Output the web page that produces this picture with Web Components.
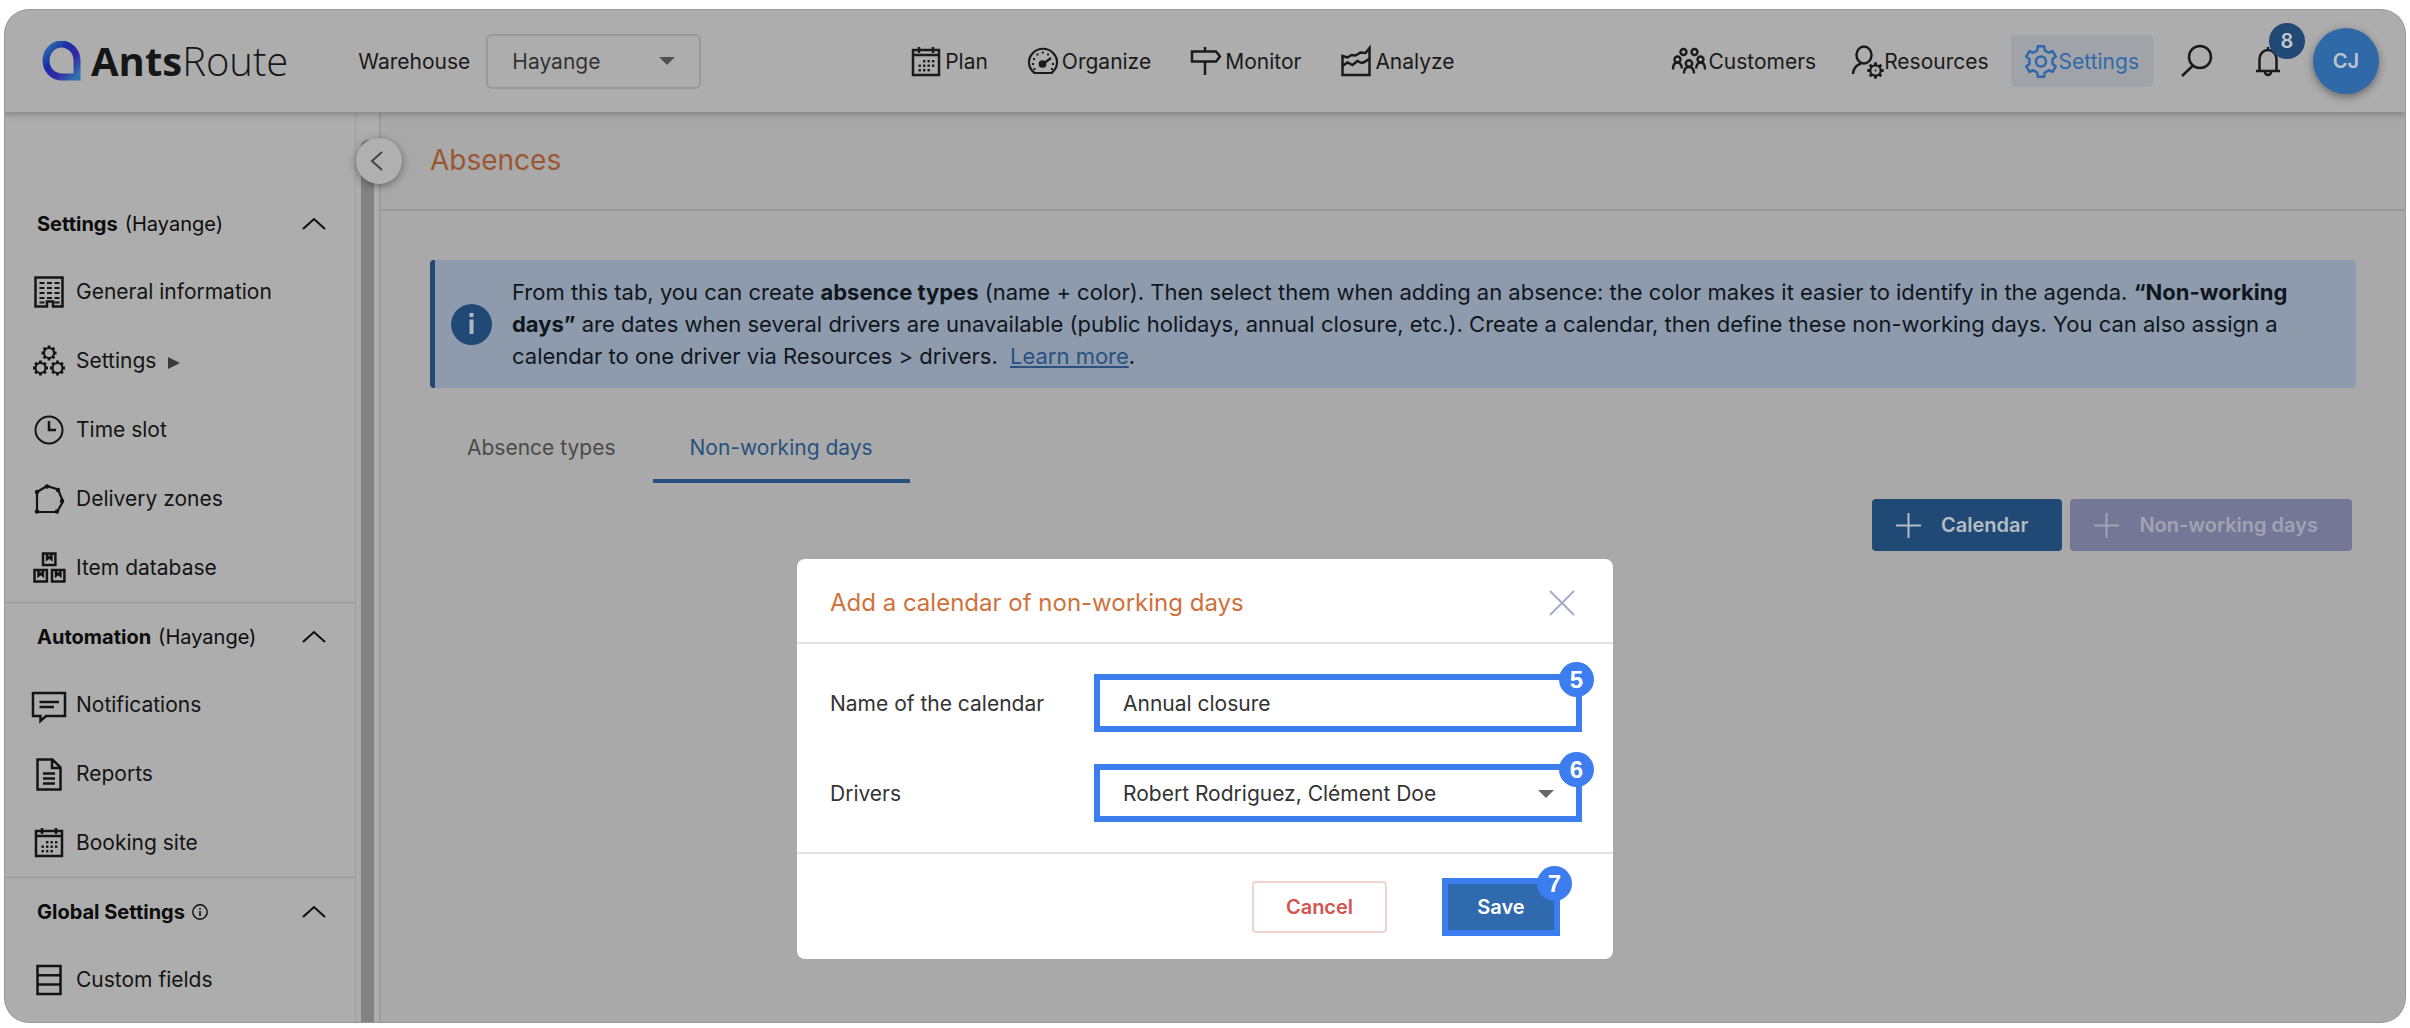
<!DOCTYPE html>
<html lang="en">
<head>
<meta charset="utf-8">
<title>AntsRoute – Absences</title>
<style>
  html, body { height: 100%; }
  body { margin: 0; background: #fff; font-family: Inter, "Noto Sans", sans-serif; font-size: 21px; color: #1a1a1a; }
</style>
</head>
<body>
<ants-app></ants-app>

<script>
const gear = (cx, cy, r, teeth, w, hole) => {
  const pts = [];
  const step = Math.PI * 2 / teeth;
  for (let i = 0; i < teeth; i++) {
    const a = i * step - Math.PI / 2;
    for (const [k, rr] of [[-0.3, 0.76], [-0.2, 1], [0.2, 1], [0.3, 0.76]]) {
      pts.push((cx + Math.cos(a + k * step) * r * rr).toFixed(2) + ' ' + (cy + Math.sin(a + k * step) * r * rr).toFixed(2));
    }
  }
  return `<path stroke-width="${w}" stroke-linejoin="round" d="M${pts.join('L')}Z"/>` +
    (hole ? `<circle cx="${cx}" cy="${cy}" r="${hole}" stroke-width="${w}"/>` : '');
};
/* a ring with short teeth round it, for the smallest gears */
const cog = (cx, cy, r, tooth) => {
  let d = '';
  for (let i = 0; i < 8; i++) {
    const c = Math.cos(i * Math.PI / 4), s = Math.sin(i * Math.PI / 4);
    d += `M${(cx + c * r).toFixed(2)} ${(cy + s * r).toFixed(2)}L${(cx + c * (r + tooth)).toFixed(2)} ${(cy + s * (r + tooth)).toFixed(2)}`;
  }
  return `<circle cx="${cx}" cy="${cy}" r="${r}" stroke-width="2.200"/><path d="${d}" stroke-width="2.800"/>`;
};
const dots = (list, s) => list.map(([x, y]) => `<rect x="${x}" y="${y}" width="${s}" height="${s}" fill="currentColor" stroke="none"/>`).join('');
const calDots = dots([[12,14],[16.5,14],[21,14],[7.5,18.5],[12,18.5],[16.5,18.5],[21,18.5],[7.5,23],[12,23],[16.5,23]], 2.4);
const box = (x, y) => `<path d="M${x} ${y}h12.400v11.500h-12.400zM${x + 4} ${y}v5.500l2.200-1.800 2.200 1.800v-5.500"/>`;

const ICONS = {
  calendar: `<path d="M2 4h26v25H2zM2 9h26M8 1v6M22 1v6"/>${calDots}`,
  gauge: `<path d="M6.500 27A14 13.500 0 1 1 23.500 27Z" stroke-width="2.200"/><circle cx="14.500" cy="18" r="2.600" fill="currentColor"/><path d="M15 18l8-6" stroke-width="2.200"/>${dots([[4,17],[5,12],[8.500,7.500],[13.800,5.500],[19,7.500],[24,17],[5.500,22],[23,22]], 2)}`,
  sign: `<path d="M1 5.500h24l4 5-4 5H1zM14 1v4M14 16v13"/>`,
  area: `<path d="M1.500 10v19h27V2l-4 5-5-.5-5 3-4-.500-4 2.500zM1.500 20l5-3.500 5 2.500 5-4 4 2 3-1 5-3.500"/>`,
  people: `<g stroke-width="2.400"><circle cx="11.500" cy="6" r="3"/><circle cx="22.500" cy="6" r="3"/><circle cx="5.500" cy="13.500" r="3"/><circle cx="28.500" cy="13.500" r="3"/><circle cx="17" cy="17.500" r="3.200"/><path d="M1 23.500c0-4 1.500-7 4.500-7s4 2.500 4.500 6M33 23.500c0-4-1.500-7-4.500-7s-4 2.500-4.500 6M12 27.500c0-4 1.500-6.500 5-6.500s5 2.500 5 6.500"/></g>`,
  userGear: `<ellipse cx="12" cy="9" rx="7.500" ry="8.500"/><path d="M1 28c.5-6 3-9 8-10.500"/>${cog(23.500, 24.500, 5.200, 3)}<circle cx="23.500" cy="24.500" r="1" fill="currentColor" stroke="none"/>`,
  gear: gear(16, 16.500, 15.500, 6, 2.500, 5),
  search: `<circle cx="19" cy="12" r="11"/><path d="M12 20.500L1 31"/>`,
  bell: `<path d="M1 26h24M4.500 26V14a8.500 9 0 0 1 17 0v12M13 5V2"/><path d="M10 27a3 3 0 1 0 6 0"/>`,
  building: `<path d="M1.500 1.500h27v29H19v-5h-6v5H1.500z"/><path stroke-width="2" stroke-dasharray="5 2.500" d="M5.500 7h20M5.500 12h20M5.500 17h20M5.500 22h20M5.500 26.500h5M20.500 26.500h5"/>`,
  gears: cog(15, 8, 5, 2.500) + cog(6.500, 23, 5, 2.500) + cog(23.500, 23, 5, 2.500),
  clock: `<circle cx="15" cy="16" r="13.500" stroke-width="2"/><path d="M15 7v9h7"/>`,
  zone: `<path d="M3 9l10-6 11 3.500 5 12L23 29H3z" stroke-width="2.200"/>${[[3,9],[13,3.500],[24,7],[28,18],[23,28.500],[3,28.500]].map(([x,y]) => `<circle cx="${x}" cy="${y}" r="2.200" fill="currentColor" stroke="none"/>`).join('')}`,
  boxes: box(9, 1.500) + box(0.500, 18) + box(18, 18),
  message: `<path d="M-1 4h32v23H12l-5.500 5v-5H-1z"/><path d="M5.500 13H25M5.500 18H20"/>`,
  report: `<path d="M3.500 1.500h15l8 8v22h-23zM18 1.500v8.500h8.500M9 15.500h12M9 20.500h12M9 25.500h12"/>`,
  rows: `<path d="M3.500 2h23v28h-23zM3.500 11.300h23M3.500 20.600h23"/>`,
  info: `<circle cx="8" cy="8" r="7.200" stroke-width="1.400"/><path stroke-width="1.600" d="M8 7v5M8 4v1.600"/>`,
  up: `<path d="M1 12L12 2l11 10" stroke-width="2"/>`,
  back: `<path d="M11 1L1 10l10 9" stroke-width="2"/>`,
  close: `<path d="M1 1l24 24M25 1L1 25" stroke-width="2"/>`,
  plus: `<path d="M12.500 0v25M0 12.500h25" stroke-width="2"/>`,
  down: `<path d="M0 0h16l-8 8z" fill="currentColor" stroke="none"/>`,
  right: `<path d="M0 0l12 6-12 6z" fill="currentColor" stroke="none"/>`,
  infoFull: `<circle cx="20.500" cy="20.500" r="20.500" fill="#204975" stroke="none"/><path stroke="#b0b7c0" stroke-width="4" d="M20.500 15.500V30M20.500 9v4"/>`
};

const define = (name, css, html) => customElements.define(name, class extends HTMLElement {
  connectedCallback() {
    if (this.shadowRoot) return;
    const root = this.attachShadow({ mode: 'open' });
    root.innerHTML = `<style>*{box-sizing:border-box}button,input,select{font:inherit;color:inherit;margin:0}${css}</style>` +
      (typeof html === 'function' ? html(this) : html);
  }
});

/* name, w, h: the icon and the box that it is drawn in */
define('ar-icon', `:host{display:inline-flex;flex:none}svg{display:block;overflow:visible}`, el => {
  const w = el.getAttribute('w') || 30, h = el.getAttribute('h') || w;
  return `<svg aria-hidden="true" width="${w}" height="${h}" viewBox="0 0 ${w} ${h}" fill="none" stroke="currentColor" stroke-width="2.500">${ICONS[el.getAttribute('name')]}</svg>`;
});

define('ar-logo', `
  :host{display:flex;align-items:center;gap:10px;font-family:"Open Sans","Noto Sans",sans-serif;font-size:40px;line-height:48px;color:#161616}
  svg{display:block;flex:none} b{font-weight:700} span{font-weight:300}`, `
  <svg width="39" height="40" viewBox="0 0 39 40" aria-hidden="true">
    <defs><linearGradient id="g" x1="0" y1="0" x2="1" y2="1"><stop offset="0" stop-color="#2c78ae"/><stop offset=".35" stop-color="#1a2fa6"/><stop offset=".65" stop-color="#3327a4"/><stop offset="1" stop-color="#2f74ae"/></linearGradient></defs>
    <path d="M35 36H19A15.500 16.500 0 1 1 35 19Z" fill="none" stroke="url(#g)" stroke-width="7"/>
  </svg>
  <div><b>Ants</b><span>Route</span></div>`);

define('nav-link', `
  :host{display:block}
  a{display:flex;align-items:center;gap:var(--icon-gap,4px);height:52px;padding:0 14px;border-radius:4px;color:inherit;text-decoration:none;white-space:nowrap}
  :host([active]) a{background:#a0a4a9;color:#3069ab}`,
  el => `<a href="#"><ar-icon name="${el.getAttribute('icon')}" w="${el.getAttribute('w') || 30}" h="${el.getAttribute('h') || 30}"></ar-icon><slot></slot></a>`);

define('app-header', `
  :host{display:flex;align-items:center;height:103px;flex:none;padding:0 26px 0 37px;background:#adadad;border-bottom:1px solid #8d8f8d;box-shadow:0 2px 6px rgba(0,0,0,.22);position:relative;z-index:2}
  .warehouse{display:flex;align-items:center;gap:16px;margin-left:70px}
  .select{position:relative;display:flex;align-items:center;color:#333}
  select{appearance:none;width:215px;height:55px;padding:0 24px;border:2px solid #999;border-radius:6px;background:none}
  .select ar-icon{position:absolute;right:26px;pointer-events:none;color:#505050}
  nav{display:flex;gap:12px}
  .main{margin:0 auto;padding-left:6px}
  .manage{gap:8px;--icon-gap:2px}
  .tools{display:flex;align-items:center;margin-left:28px}
  button{border:0;background:none;padding:0;display:flex;position:relative}
  .bell{margin:0 32px 0 42px}
  .badge{position:absolute;left:14px;top:-22px;width:36px;height:36px;border-radius:50%;background:#204975;color:#c4c8cc;font-size:20px;font-weight:600;line-height:36px;text-align:center}
  .avatar{width:66px;height:66px;border-radius:50%;background:#3069a8;color:#bcc4cc;font-size:20px;font-weight:600;align-items:center;justify-content:center;box-shadow:0 3px 8px rgba(0,0,0,.4)}`, `
  <ar-logo></ar-logo>
  <div class="warehouse">
    <label for="wh">Warehouse</label>
    <div class="select"><select id="wh"><option>Hayange</option></select><ar-icon name="down" w="16" h="8"></ar-icon></div>
  </div>
  <nav class="main" aria-label="Operations">
    <nav-link icon="calendar">Plan</nav-link>
    <nav-link icon="gauge">Organize</nav-link>
    <nav-link icon="sign">Monitor</nav-link>
    <nav-link icon="area">Analyze</nav-link>
  </nav>
  <nav class="manage" aria-label="Management">
    <nav-link icon="people" w="34">Customers</nav-link>
    <nav-link icon="userGear" w="30" h="30">Resources</nav-link>
    <nav-link icon="gear" w="32" h="33" active>Settings</nav-link>
  </nav>
  <div class="tools">
    <button aria-label="Search"><ar-icon name="search" w="32"></ar-icon></button>
    <button class="bell" aria-label="Alerts"><ar-icon name="bell" w="26" h="32"></ar-icon><span class="badge">8</span></button>
    <button class="avatar">CJ</button>
  </div>`);

define('side-item', `
  :host{display:block}
  a{display:flex;align-items:center;gap:12px;height:69px;padding-left:29px;color:#141414;text-decoration:none}
  ar-icon[name=right]{color:#3a3a3a;margin-top:4px}`,
  el => `<a href="#"><ar-icon name="${el.getAttribute('icon')}" w="30" h="32"></ar-icon><slot></slot>${el.hasAttribute('sub') ? '<ar-icon name="right" w="12"></ar-icon>' : ''}</a>`);

define('side-section', `
  :host{display:block;border-top:1px solid #989898}
  :host(:first-of-type){border-top:0}
  button{display:flex;align-items:center;width:100%;height:67px;border:0;background:none;padding:0 29px 0 32px;font-size:20px;text-align:left;color:#0c0c0c}
  b{font-weight:700;margin-right:7px}
  ar-icon[name=up]{margin-left:auto}`,
  el => `<button><b>${el.getAttribute('title-text')}</b>${el.getAttribute('scope') || ''}${el.hasAttribute('info') ? '<ar-icon name="info" w="16"></ar-icon>' : ''}<ar-icon name="up" w="24" h="14"></ar-icon></button><slot></slot>`);

define('side-bar', `
  :host{display:flex;flex:none;width:376px;background:#adadad;border-right:2px solid #9b9b9b;position:relative}
  .list{flex:1;padding-top:77px}
  .track{width:24px;border-left:1px solid #9f9f9f;padding:27px 5px 0 5px;display:flex}
  .thumb{flex:1;background:#828282;border-radius:7px 7px 0 0}
  .fold{position:absolute;right:-23px;top:25px;width:46px;height:46px;border:0;border-radius:50%;background:#b0b0b0;color:#444;display:flex;align-items:center;justify-content:center;padding:0 4px 0 0;box-shadow:0 2px 8px rgba(0,0,0,.4)}`, `
  <div class="list">
    <side-section title-text="Settings" scope="(Hayange)">
      <side-item icon="building">General information</side-item>
      <side-item icon="gears" sub>Settings</side-item>
      <side-item icon="clock">Time slot</side-item>
      <side-item icon="zone">Delivery zones</side-item>
      <side-item icon="boxes">Item database</side-item>
    </side-section>
    <side-section title-text="Automation" scope="(Hayange)">
      <side-item icon="message">Notifications</side-item>
      <side-item icon="report">Reports</side-item>
      <side-item icon="calendar">Booking site</side-item>
    </side-section>
    <side-section title-text="Global Settings" info>
      <side-item icon="rows">Custom fields</side-item>
    </side-section>
  </div>
  <div class="track"><div class="thumb"></div></div>
  <button class="fold" aria-label="Collapse menu"><ar-icon name="back" w="12" h="20"></ar-icon></button>`);

define('info-banner', `
  :host{display:flex;align-items:center;gap:20px;padding:16px 50px 16px 16px;border-left:5px solid #204975;border-radius:4px;background:#8d9bad;font-size:22px;line-height:32px;color:#10161d}
  p{margin:0}`, `<ar-icon name="infoFull" w="41"></ar-icon><p><slot></slot></p>`);

define('tab-bar', `
  :host{display:flex}
  button{border:0;border-bottom:4px solid transparent;background:none;height:64px;padding:0 37px 4px;color:#4b4b4b}
  button[aria-selected=true]{color:#28517f;border-color:#28517f}`, `
  <button role="tab" aria-selected="false">Absence types</button><button role="tab" aria-selected="true">Non-working days</button>`);

define('add-button', `
  :host{display:block}
  button{display:flex;align-items:center;gap:20px;height:52px;padding:0 34px 0 24px;border:0;border-radius:4px;background:#204975;color:#b6bcc3;font-size:20px;font-weight:600;white-space:nowrap}
  button:disabled{background:#757797;color:#a2a3b2}`,
  el => `<button ${el.hasAttribute('disabled') ? 'disabled' : ''}><ar-icon name="plus" w="25"></ar-icon><slot></slot></button>`);

define('absences-page', `
  :host{display:block;flex:1;min-width:0;background:#a9a9a9}
  h1{margin:0;height:98px;padding:0 49px;border-bottom:2px solid #999;font-size:28px;font-weight:400;line-height:94px;color:#9b5731}
  main{padding:49px 49px 0 49px}
  a{color:#28517f;margin-left:6px}
  tab-bar{margin-top:31px}
  .actions{display:flex;justify-content:flex-end;gap:8px;padding:16px 4px 0 0}`, `
  <h1>Absences</h1>
  <main>
    <info-banner>From this tab, you can create <b>absence types</b> (name + color). Then select them when adding an absence: the color makes it easier to identify in the agenda. <b>“Non-working days”</b> are dates when several drivers are unavailable (public holidays, annual closure, etc.). Create a calendar, then define these non-working days. You can also assign a calendar to one driver via Resources &gt; drivers. <a href="#">Learn more</a>.</info-banner>
    <tab-bar role="tablist"></tab-bar>
    <div class="actions"><add-button>Calendar</add-button><add-button disabled>Non-working days</add-button></div>
  </main>`);

/* wraps a control in a numbered highlight frame */
define('step-mark', `
  :host{display:block;position:relative;border:6px solid #3c7df0}
  span{position:absolute;right:-18px;top:-18px;width:35px;height:35px;border-radius:50%;background:#3c7df0;color:#fff;font:bold 24px/35px "Liberation Sans",sans-serif;text-align:center}`,
  el => `<slot></slot><span>${el.getAttribute('step')}</span>`);

define('calendar-dialog', `
  :host{display:block;width:816px;background:#fff;border-radius:8px;color:#333}
  header{display:flex;align-items:center;justify-content:space-between;height:85px;padding:4px 38px 0 33px;border-bottom:2px solid #e2e2e2}
  h2{margin:0;font-size:24px;font-weight:400;color:#d0713c}
  .x{border:0;background:none;padding:0;display:flex;color:#a6abcf}
  .body{padding:30px 31px 30px 33px;display:grid;grid-template-columns:264px 1fr;row-gap:32px;align-items:center}
  input,select{display:block;width:100%;height:46px;border:0;padding:0 23px;background:#fff;appearance:none;outline:0}
  .select ar-icon{position:absolute;right:22px;top:20px;color:#666;pointer-events:none}
  footer{display:flex;justify-content:flex-end;align-items:center;gap:55px;height:107px;padding:0 53px 0 0;border-top:2px solid #e2e2e2;font-size:20px}
  .cancel{height:52px;width:135px;border:2px solid #f0d5d0;border-radius:4px;background:#fff;color:#d35450;font-weight:600}
  .save{display:block;height:46px;width:106px;border:0;background:#2f6aae;color:#fff;font-weight:600}`, `
  <header><h2>Add a calendar of non-working days</h2><button class="x" aria-label="Close"><ar-icon name="close" w="26"></ar-icon></button></header>
  <div class="body">
    <label for="name">Name of the calendar</label>
    <step-mark step="5"><input id="name" type="text" value="Annual closure"></step-mark>
    <label for="drivers">Drivers</label>
    <step-mark step="6" class="select"><select id="drivers"><option>Robert Rodriguez, Clément Doe</option></select><ar-icon name="down" w="16" h="8"></ar-icon></step-mark>
  </div>
  <footer><button class="cancel">Cancel</button><step-mark step="7"><button class="save">Save</button></step-mark></footer>`);

define('ants-app', `
  :host{display:flex;height:100%;padding:10px 5px 6px;box-sizing:border-box;position:relative}
  .frame{flex:1;min-width:0;display:flex;flex-direction:column;border-radius:24px;overflow:hidden;box-shadow:0 0 0 1px #969896;background:#a9a9a9}
  .cols{flex:1;display:flex;min-height:0}
  .layer{position:absolute;inset:0;display:flex;justify-content:center;align-items:flex-start;padding-top:559px;z-index:5}`, `
  <div class="frame">
    <app-header></app-header>
    <div class="cols"><side-bar></side-bar><absences-page></absences-page></div>
  </div>
  <div class="layer"><calendar-dialog role="dialog" aria-label="Add a calendar of non-working days"></calendar-dialog></div>`);
</script>
</body>
</html>
